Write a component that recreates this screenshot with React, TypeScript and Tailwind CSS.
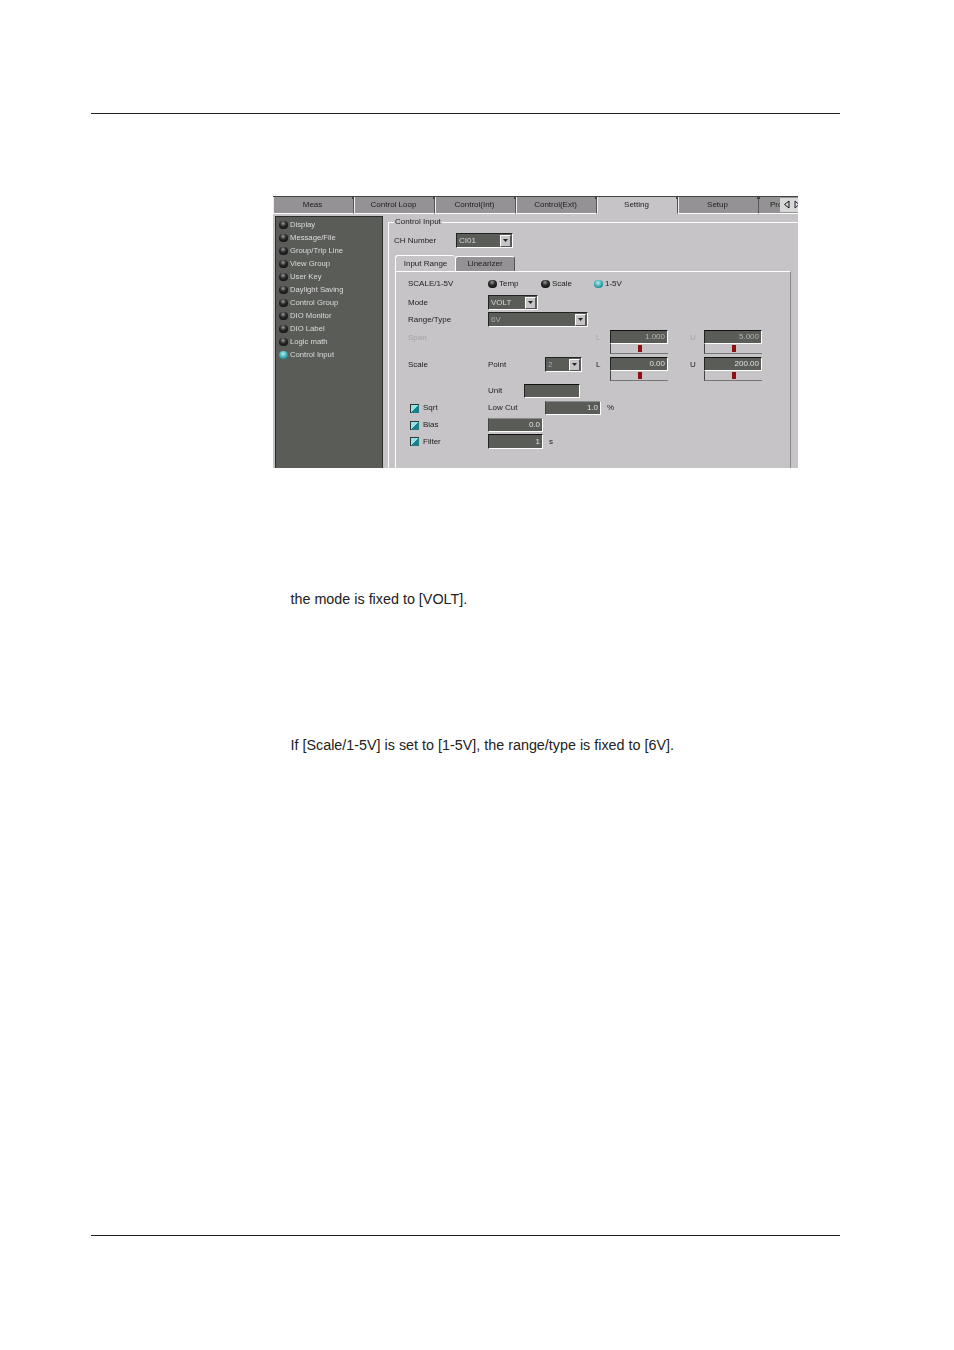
import React from 'react';

const TABS = ['Meas', 'Control Loop', 'Control(Int)', 'Control(Ext)', 'Setting', 'Setup'];
const MENU = ['Display', 'Message/File', 'Group/Trip Line', 'View Group', 'User Key', 'Daylight Saving', 'Control Group', 'DIO Monitor', 'DIO Label', 'Logic math', 'Control Input'];

const Ball = ({ on = false }: { on?: boolean }) => (
  <span
    className={`block w-[9px] h-[8px] shrink-0 rounded-full ${
      on
        ? 'bg-[radial-gradient(circle_at_45%_35%,#b4f0f0,#35a6ae_55%,#1d5f66)]'
        : 'bg-[radial-gradient(circle_at_45%_30%,#9a9a9a,#2a2a2a_40%,#050505)]'
    }`}
  />
);

const Arrow = () => (
  <span className="w-[11px] h-[12px] bg-[#c6c4c6] border-t border-l border-white border-r border-b border-r-[#555] border-b-[#555] flex items-center justify-center shrink-0">
    <svg width="5" height="3" viewBox="0 0 5 3">
      <path d="M0 0 H5 L2.5 3 Z" fill="#222" />
    </svg>
  </span>
);

const Select = ({ value, w, muted }: { value: string; w: string; muted?: boolean }) => (
  <div className={`${w} h-[15px] bg-[#5a5c58] border-t border-l border-[#222] flex items-center justify-between pl-[2px] pr-[1px] border-r border-b border-r-white border-b-white`}>
    <span className={muted ? 'text-[#a8a8a8]' : 'text-[#d8d8d8]'}>{value}</span>
    <Arrow />
  </div>
);

const Field = ({ value, w, h = 'h-[14px]', dim, soft }: { value?: string; w: string; h?: string; dim?: boolean; soft?: boolean }) => (
  <div className={`${w} ${h} bg-[#5a5c58] border-t border-l border-r border-b border-r-white border-b-white flex items-center justify-end pr-[2px] shrink-0 ${soft ? 'border-t-[#8a8a8a] border-l-[#444]' : 'border-t-[#111] border-l-[#222]'} ${dim ? 'text-[#b4b4b4]' : 'text-[#e0e0e0]'}`}>
    {value}
  </div>
);

const SliderField = ({ value, dim }: { value: string; dim?: boolean }) => (
  <div className="w-[58px] h-[24px] shrink-0 flex flex-col">
    <Field value={value} w="w-full" dim={dim} />
    <div className="flex-1 border-l border-b border-l-[#444] border-b-[#777] flex items-center justify-center">
      <span className="block w-[4px] h-[7px] bg-[#8e1010]" />
    </div>
  </div>
);

const Check = () => (
  <span className="block w-[9px] h-[9px] shrink-0 border-t border-l border-[#333] bg-[linear-gradient(135deg,#8fe6e6_50%,#1f7f88_50%)]" />
);

const RadioItem = ({ label, on, w }: { label: string; on?: boolean; w: string }) => (
  <div className={`${w} flex items-center gap-[2px]`}>
    <Ball on={on} />
    <span>{label}</span>
  </div>
);

export default function App() {
  return (
    <div className="w-[954px] h-[1350px] bg-white relative font-['Liberation_Sans',Arial,sans-serif] overflow-hidden">
      <div className="mx-[91px] w-[749px] h-[1123px] mt-0 pt-[113px] box-content">
        <div className="h-[1123px] border-t border-b border-[#222] pl-[182px] pt-[82px]">
          {/* Application screenshot */}
          <div className="w-[525px] h-[272px] flex flex-col bg-[#c6c4c6] text-[8px] leading-none text-[#222] blur-[0.35px] overflow-hidden">
            <div className="h-[18px] flex border-t border-[#444] shrink-0">
              {TABS.map((t) => (
                <div
                  key={t}
                  className={`relative w-[81px] pr-[2px] flex items-center justify-center border-l border-r border-b border-l-[#eee] border-r-[#555] ${
                    t === 'Setting' ? 'bg-[#c6c4c6] border-b-[#c6c4c6]' : 'bg-[#949294] border-b-white'
                  }`}
                >
                  <span className="absolute top-0 -right-[2px] w-[3px] h-[2px] bg-[#444]" />
                  {t}
                </div>
              ))}
              <div className="flex-1 bg-[#949294] border-b border-b-white flex items-center pl-[11px] overflow-hidden">
                <span className="w-[10px] shrink-0 overflow-hidden">Pro</span>
                <svg width="18" height="14" viewBox="0 0 18 14" className="shrink-0 bg-[#d8d8d8]">
                  <path d="M9 3 L4.5 6.5 L9 10 Z" fill="none" stroke="#111" strokeWidth="1" />
                  <path d="M15 3 L19 6.5 L15 10 Z" fill="none" stroke="#224" strokeWidth="1" />
                </svg>
              </div>
            </div>

            <div className="flex-1 flex pt-[2px] min-h-0">
              {/* Left menu */}
              <div className="ml-[2px] w-[108px] shrink-0 bg-[#5a5c58] border border-[#2c2c2c] border-b-0 pt-[1px] pl-[3px] text-[7.7px] text-[#dcdcdc]">
                {MENU.map((m) => (
                  <div key={m} className="h-[13px] flex items-center gap-[2px]">
                    <Ball on={m === 'Control Input'} />
                    <span>{m}</span>
                  </div>
                ))}
              </div>

              {/* Control Input group */}
              <div className="flex-1 ml-[5px] mt-[6px] border-t border-l border-white relative flex flex-col min-w-0">
                <span className="absolute -top-[5px] left-[5px] bg-[#c6c4c6] px-[1px]">Control Input</span>
                <div className="mt-[10px] ml-[5px] h-[15px] flex items-center shrink-0">
                  <span className="w-[62px]">CH Number</span>
                  <Select value="CI01" w="w-[57px]" />
                </div>

                <div className="mt-[7px] ml-[6px] h-[16px] flex items-end shrink-0">
                  <div className="w-[60px] h-[16px] bg-[#c6c4c6] border-t border-l border-white rounded-t-[3px] flex items-center justify-center">Input Range</div>
                  <div className="w-[60px] h-[15px] bg-[#949294] border-t border-l border-r border-white border-r-[#555] rounded-t-[3px] flex items-center justify-center">Linearizer</div>
                </div>

                {/* Tab page */}
                <div className="ml-[6px] w-[396px] flex-1 border-t border-l border-white border-r border-r-[#888] pl-[12px] pt-[5px]">
                  <div className="h-[14px] flex items-center">
                    <span className="w-[80px]">SCALE/1-5V</span>
                    <RadioItem label="Temp" w="w-[53px]" />
                    <RadioItem label="Scale" w="w-[53px]" />
                    <RadioItem label="1-5V" on w="w-[53px]" />
                  </div>
                  <div className="mt-[4px] h-[15px] flex items-center">
                    <span className="w-[80px]">Mode</span>
                    <Select value="VOLT" w="w-[50px]" />
                  </div>
                  <div className="mt-[2px] h-[15px] flex items-center">
                    <span className="w-[80px]">Range/Type</span>
                    <Select value="6V" w="w-[100px]" muted />
                  </div>
                  <div className="mt-[3px] h-[24px] flex items-start">
                    <span className="w-[188px] mt-[4px] text-[#a4a4a4]">Span</span>
                    <span className="w-[14px] mt-[4px] text-[#a4a4a4]">L</span>
                    <SliderField value="1.000" dim />
                    <span className="ml-[22px] w-[14px] mt-[4px] text-[#a4a4a4]">U</span>
                    <SliderField value="5.000" dim />
                  </div>
                  <div className="mt-[3px] h-[24px] flex items-start">
                    <span className="w-[80px] mt-[4px]">Scale</span>
                    <span className="w-[57px] mt-[4px]">Point</span>
                    <Select value="2" w="w-[37px]" muted />
                    <span className="ml-[14px] w-[14px] mt-[4px]">L</span>
                    <SliderField value="0.00" />
                    <span className="ml-[22px] w-[14px] mt-[4px]">U</span>
                    <SliderField value="200.00" />
                  </div>
                  <div className="mt-[3px] h-[14px] flex items-center">
                    <span className="ml-[80px] w-[36px]">Unit</span>
                    <Field w="w-[56px]" />
                  </div>
                  <div className="mt-[3px] h-[14px] flex items-center">
                    <div className="w-[80px] pl-[2px] flex items-center gap-[4px]">
                      <Check />
                      <span>Sqrt</span>
                    </div>
                    <span className="w-[57px]">Low Cut</span>
                    <Field value="1.0" w="w-[56px]" soft />
                    <span className="ml-[6px]">%</span>
                  </div>
                  <div className="mt-[3px] h-[14px] flex items-center">
                    <div className="w-[80px] pl-[2px] flex items-center gap-[4px]">
                      <Check />
                      <span>Bias</span>
                    </div>
                    <Field value="0.0" w="w-[55px]" soft />
                  </div>
                  <div className="mt-[2px] h-[15px] flex items-center">
                    <div className="w-[80px] pl-[2px] flex items-center gap-[4px]">
                      <Check />
                      <span>Filter</span>
                    </div>
                    <Field value="1" w="w-[55px]" h="h-[15px]" />
                    <span className="ml-[6px]">s</span>
                  </div>
                </div>
              </div>
            </div>
          </div>

          {/* Body text */}
          <p className="mt-[124px] ml-[17.5px] text-[14.35px] leading-[15px] text-[#222]">the mode is fixed to [VOLT].</p>
          <p className="mt-[131px] ml-[17.5px] text-[14.35px] leading-[15px] text-[#222]">If [Scale/1-5V] is set to [1-5V], the range/type is fixed to [6V].</p>
        </div>
      </div>
    </div>
  );
}
